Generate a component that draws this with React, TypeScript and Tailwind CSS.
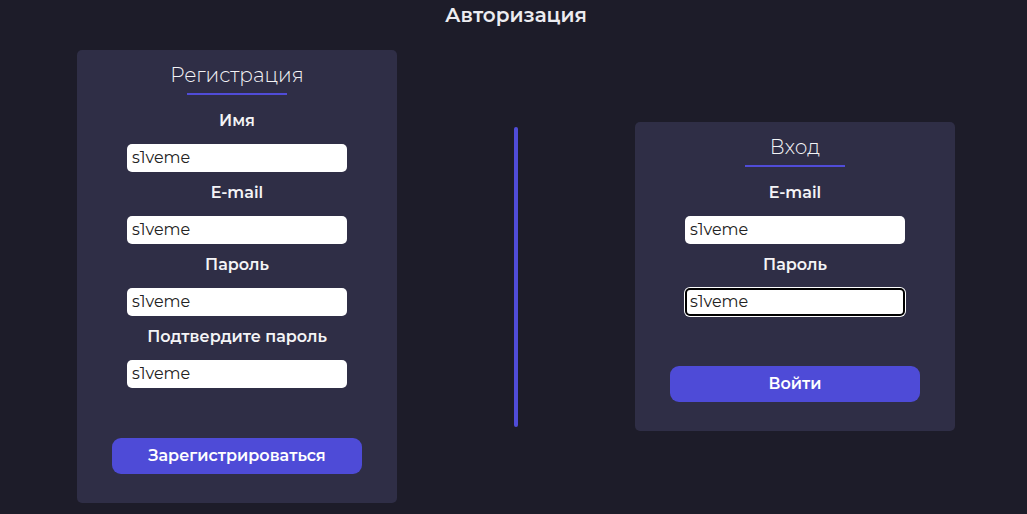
import React from 'react'

type Field = { label: string; focused?: boolean }

function FormCard({
  title,
  fields,
  action,
}: {
  title: string
  fields: Field[]
  action: string
}) {
  return (
    <div className="flex w-[320px] flex-col items-center rounded-[5px] bg-[#2f2e46] pt-[13px] pb-[29px]">
      <h2 className="text-[20px] leading-[24px] font-light text-[#f4f4f6]">{title}</h2>
      <div className="mt-[6px] h-[2px] w-[100px] bg-[#504cd8]" />
      <div className="mt-[14px] flex flex-col items-center">
        {fields.map((f) => (
          <div key={f.label} className="flex flex-col items-center">
            <label className="text-[16px] leading-[24px] font-semibold text-[#f4f4f6]">
              {f.label}
            </label>
            <input
              defaultValue="s1veme"
              className={
                f.focused
                  ? 'mt-[11px] mb-[9px] h-[28px] w-[220px] rounded-[5px] border-2 border-black bg-white px-[3px] pb-[1px] text-[16px] leading-[24px] text-[#222] ring-1 ring-white outline-none'
                  : 'mt-[11px] mb-[9px] h-[28px] w-[220px] rounded-[5px] bg-white px-[5px] pb-[1px] text-[16px] leading-[24px] text-[#222] outline-none'
              }
            />
          </div>
        ))}
      </div>
      <button className="mt-[41px] h-[36px] w-[250px] rounded-[9px] bg-[#4e4bd7] text-[16px] font-semibold text-white">
        {action}
      </button>
    </div>
  )
}

export default function App() {
  return (
    <div className="min-h-screen bg-[#1d1c29] font-['Montserrat','Inter',sans-serif]">
      <h1 className="pt-[3px] pl-[5px] text-center text-[20px] leading-[24px] font-semibold text-[#ececf0]">
        Авторизация
      </h1>
      <div className="mt-[23px] flex items-center justify-center gap-[117px] pl-[5px]">
        <FormCard
          title="Регистрация"
          fields={[
            { label: 'Имя' },
            { label: 'E-mail' },
            { label: 'Пароль' },
            { label: 'Подтвердите пароль' },
          ]}
          action="Зарегистрироваться"
        />
        <div className="h-[300px] w-[4px] rounded-full bg-[#504cd8]" />
        <FormCard
          title="Вход"
          fields={[{ label: 'E-mail' }, { label: 'Пароль', focused: true }]}
          action="Войти"
        />
      </div>
    </div>
  )
}
